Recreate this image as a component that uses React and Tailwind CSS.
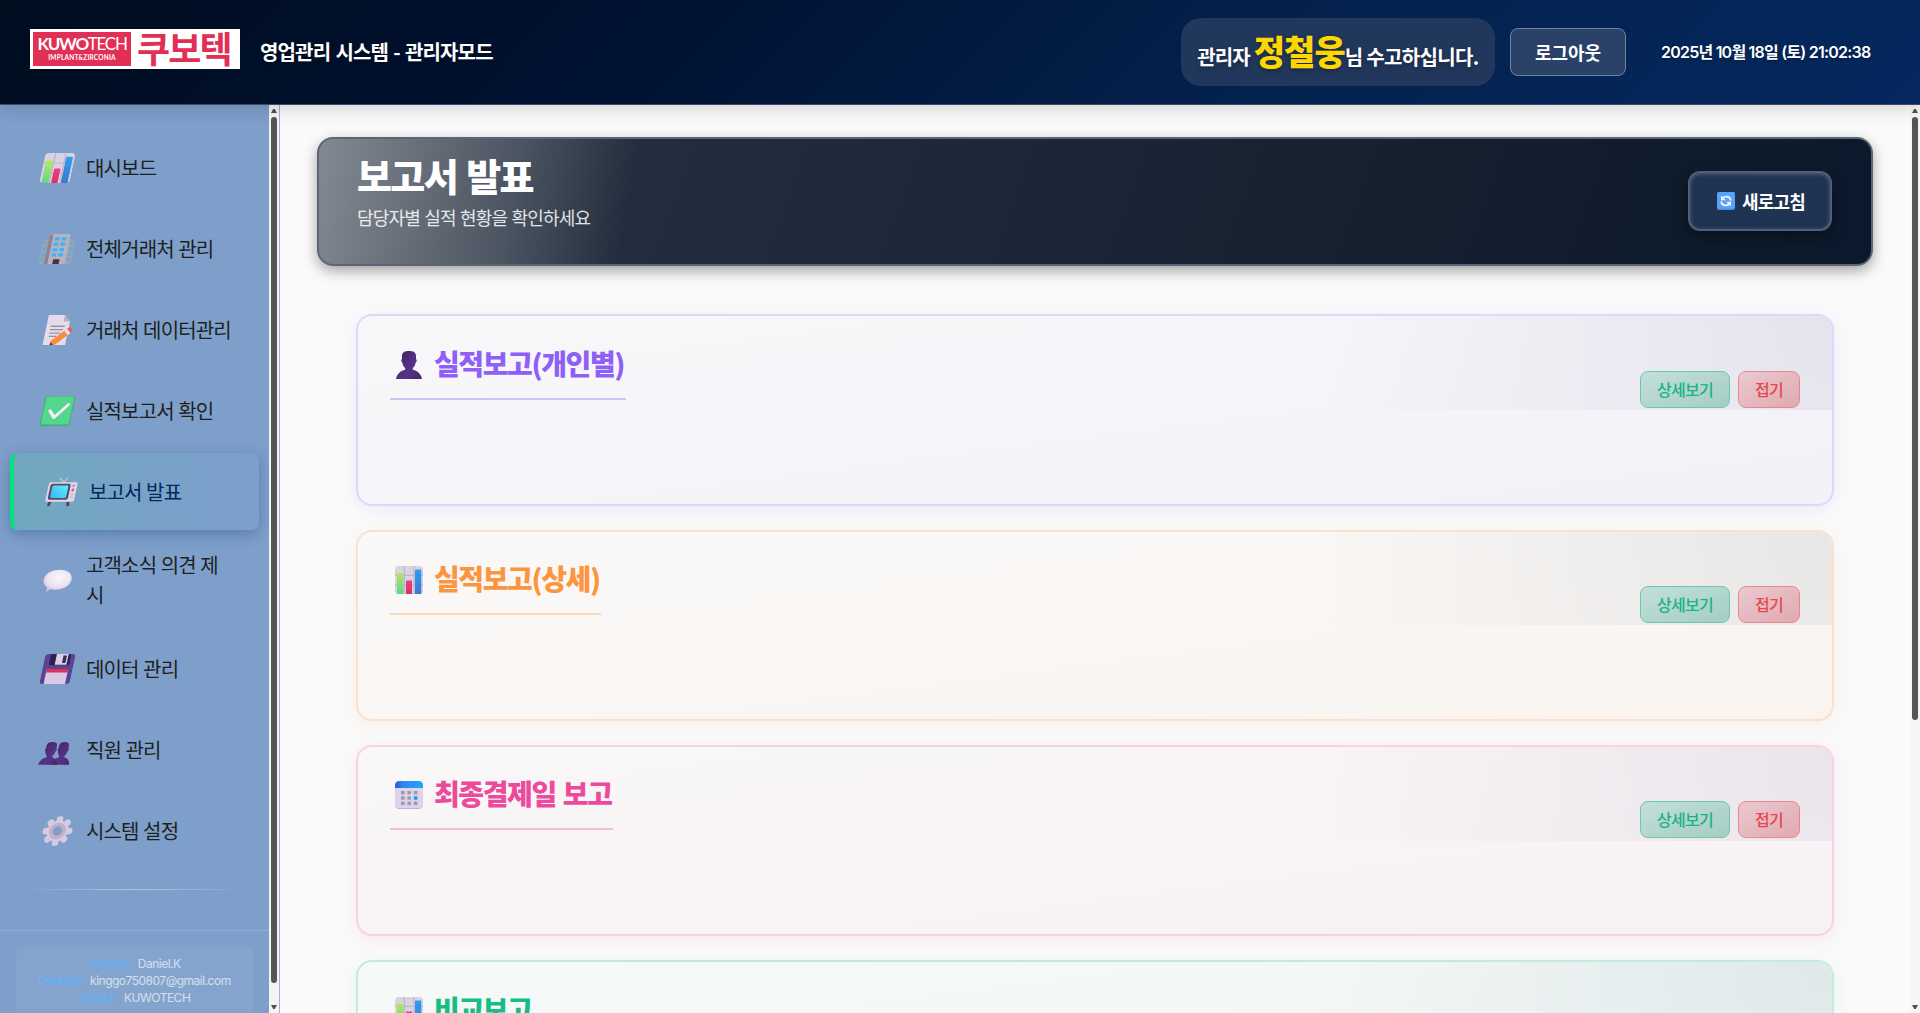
import React from "react";

const KR = "font-['Noto_Sans_CJK_KR',sans-serif]";

function ChartIcon({ className }) {
  return (
    <svg viewBox="0 0 28 28" className={className}>
      <defs>
        <linearGradient id="barGreen" x1="0" y1="0" x2="0" y2="1">
          <stop offset="0" stopColor="#b4e85c" />
          <stop offset="1" stopColor="#5fd68c" />
        </linearGradient>
        <linearGradient id="barRed" x1="0" y1="0" x2="0" y2="1">
          <stop offset="0" stopColor="#ee3d86" />
          <stop offset="1" stopColor="#d93360" />
        </linearGradient>
        <linearGradient id="barBlue" x1="0" y1="0" x2="0" y2="1">
          <stop offset="0" stopColor="#2f9df0" />
          <stop offset="1" stopColor="#3f78cc" />
        </linearGradient>
      </defs>
      <rect width="28" height="28" rx="3.5" fill="#d9d2e2" />
      <path d="M9.3 0v28M19 0v28M0 9.3h28M0 18.7h28" stroke="#b9b0c6" strokeWidth="1" />
      <rect x="2" y="7" width="6.5" height="21" fill="url(#barGreen)" />
      <rect x="11" y="14.5" width="6" height="13.5" rx="0.6" fill="url(#barRed)" />
      <rect x="20" y="3.5" width="6.3" height="24.5" rx="0.6" fill="url(#barBlue)" />
    </svg>
  );
}

function BuildingIcon({ className }) {
  const rows = [3, 8, 13, 18];
  return (
    <svg viewBox="0 0 28 28" className={`overflow-visible ${className}`}>
      <rect x="-1" y="5" width="30" height="23" rx="1" fill="#a79eae" />
      <path d="M5 0h17q1.500 0 1.500 1.500V28H4V1q0-1 1-1z" fill="#b9b1be" />
      <rect x="4" y="0.500" width="3.500" height="27.500" fill="#8c8494" />
      {rows.map((y) => (
        <g key={y} fill="#35b8fa">
          <rect x="9.500" y={y} width="4.400" height="3" />
          <rect x="15.800" y={y} width="4.400" height="3" />
          <rect x="0.200" y={y + 4.500} width="2.600" height="2.600" />
          <rect x="25" y={y + 4.500} width="2.600" height="2.600" />
        </g>
      ))}
      <rect x="12" y="23.500" width="6" height="4.500" fill="#46304f" />
    </svg>
  );
}

function MemoIcon({ className }) {
  return (
    <svg viewBox="0 0 28 28" className={className}>
      <path d="M3 0h15l6 6v22H3z" fill="#e4dcea" />
      <path d="M18 0v6h6z" fill="#b9aec4" />
      <path d="M7 10.5h13M7 13.7h12M7 16.9h10M7 20h7" stroke="#9a91a4" strokeWidth="1.2" />
      <path d="M10 24L22 13.5l4 4L14 28H9.5z" fill="#fb8b3c" />
      <path d="M20.5 14.8l2.3-2 4 4-2.3 2z" fill="#f1dfe8" />
      <path d="M22.8 12.8q2-2 4-.2 1.800 2 0 4.200z" fill="#f8583f" />
      <path d="M9.500 28l.5-2.500 2.500 2.500z" fill="#5a2a45" />
    </svg>
  );
}

function CheckIcon({ className }) {
  return (
    <svg viewBox="0 0 28 28" className={className}>
      <rect width="28" height="28" rx="2.500" fill="#3fb078" />
      <rect x="1" y="0.5" width="26" height="26" rx="2" fill="#55d68d" />
      <path d="M7 14l5 6L23 8" fill="none" stroke="#f4f0f8" strokeWidth="2.900" strokeLinecap="round" strokeLinejoin="round" />
    </svg>
  );
}

function TvIcon({ className }) {
  return (
    <svg viewBox="0 0 28 28" className={className}>
      <defs>
        <linearGradient id="tvScreen" x1="0" y1="1" x2="1" y2="0">
          <stop offset="0" stopColor="#35b5fb" />
          <stop offset="1" stopColor="#5ff0fb" />
        </linearGradient>
      </defs>
      <path d="M9 0.500L14.500 4.500 17.500 0" fill="none" stroke="#cfc6d4" strokeWidth="1" />
      <path d="M5 23l-1 4.500M22 23l1 4.500" stroke="#553d63" strokeWidth="2.600" />
      <rect x="0" y="4.500" width="28" height="19" rx="1.800" fill="#e0d6e8" />
      <rect x="2" y="6" width="19.500" height="15.500" rx="2" fill="#5a4a62" />
      <rect x="4" y="7.700" width="15.500" height="12" rx="1.300" fill="url(#tvScreen)" />
      <circle cx="24.500" cy="8" r="1.300" fill="#a79bb2" />
      <circle cx="24.500" cy="12" r="1.400" fill="#f04fa0" />
      <path d="M23 16.500h3M23 19h3" stroke="#b9adc4" strokeWidth="1" />
    </svg>
  );
}

function BubbleIcon({ className }) {
  return (
    <svg viewBox="0 0 28 28" className={className}>
      <defs>
        <radialGradient id="bubble" cx="0.550" cy="0.350" r="0.700">
          <stop offset="0" stopColor="#faf7fc" />
          <stop offset="0.600" stopColor="#ece3f2" />
          <stop offset="1" stopColor="#c9b6dc" />
        </radialGradient>
      </defs>
      <path d="M14 4.500c8 0 13 4 13 9.300 0 5.500-5.500 9.200-13 9.200-1.800 0-3.400-.2-4.800-.5L6.500 25c-.5.300-1-.1-.9-.7l.4-3.300C3 19.500 1 17 1 13.800 1 8.500 6 4.500 14 4.500z" fill="url(#bubble)" />
    </svg>
  );
}

function FloppyIcon({ className }) {
  return (
    <svg viewBox="0 0 28 28" className={className}>
      <rect width="28" height="28" rx="2.500" fill="#5b4494" />
      <rect x="5" y="0" width="19" height="10.500" rx="1.500" fill="#2d2150" />
      <rect x="10.500" y="0" width="11" height="10" fill="#dcd0e6" />
      <rect x="17" y="1.500" width="3.200" height="7" fill="#3a2a60" />
      <rect x="4" y="14" width="20" height="14" fill="#d8c9e6" />
      <rect x="4" y="14" width="20" height="3.200" fill="#d93355" />
    </svg>
  );
}

function Person({ id }) {
  return (
    <>
      <defs>
        <linearGradient id={id} x1="0" y1="0" x2="1" y2="1">
          <stop offset="0" stopColor="#44225f" />
          <stop offset="0.600" stopColor="#56338a" />
          <stop offset="1" stopColor="#47256a" />
        </linearGradient>
      </defs>
      <path d="M14 0c4 0 6.500.8 7 4.500v3.500c1 .3 1 3.200-.3 3.500-.3 2.500-1.500 4.500-2.900 5.600v1.600c5 1.200 8.200 4.200 9.200 9.300H1c1-5.100 4.200-8.100 9.200-9.300v-1.600c-1.400-1.100-2.600-3.100-2.900-5.600C6 11.200 6 8.300 7 8V4.500C7.500.8 10 0 14 0z" fill={`url(#${id})`} />
    </>
  );
}

function PersonIcon({ className }) {
  return (
    <svg viewBox="0 0 28 28" className={className}>
      <Person id="personOne" />
    </svg>
  );
}

function PeopleIcon({ className }) {
  return (
    <svg viewBox="0 0 28 28" className={`overflow-visible ${className}`}>
      <g transform="translate(10 6.500) scale(0.660 0.760)"><Person id="personBack" /></g>
      <g transform="translate(-2 6.500) scale(0.700 0.760)"><Person id="personFront" /></g>
    </svg>
  );
}

function GearIcon({ className }) {
  const teeth = [0, 45, 90, 135, 180, 225, 270, 315];
  return (
    <svg viewBox="0 0 28 28" className={className}>
      <g fill="#d9cae4">
        {teeth.map((a) => (
          <rect key={a} x="11" y="0.200" width="6" height="9" rx="2.400" transform={`rotate(${a} 14 14)`} />
        ))}
        <circle cx="14" cy="14" r="9.900" />
      </g>
      <circle cx="14" cy="14" r="6.300" fill="none" stroke="#c0b3ca" strokeWidth="3.400" />
      <circle cx="14" cy="14" r="4.300" fill="#7e9fca" stroke="#a99cb5" strokeWidth="0.800" />
    </svg>
  );
}

function CalendarIcon({ className }) {
  const rows = [10, 15.300, 20.600];
  const cols = [6, 12.400, 18.800];
  return (
    <svg viewBox="0 0 28 28" className={className}>
      <defs>
        <linearGradient id="calTop" x1="0" y1="0" x2="1" y2="0">
          <stop offset="0" stopColor="#2f56d8" />
          <stop offset="0.300" stopColor="#2f86f4" />
          <stop offset="1" stopColor="#22a6fb" />
        </linearGradient>
      </defs>
      <rect width="28" height="28" rx="4.500" fill="#cba5ee" />
      <rect width="28" height="27" rx="4" fill="#ddd3ea" />
      <path d="M0 7V5q0-5 5-5h18q5 0 5 5v2z" fill="url(#calTop)" />
      {rows.map((y, r) =>
        cols.map((x, c) => (
          <rect key={x + "-" + y} x={x} y={y} width="3.600" height="3.400" fill={r === 1 && c === 2 ? "#1f97f5" : "#a298ae"} />
        ))
      )}
    </svg>
  );
}

function RefreshIcon({ className }) {
  return (
    <svg viewBox="0 0 18 18" className={className}>
      <rect width="18" height="18" rx="2" fill="#4a8bee" />
      <rect width="18" height="16.500" rx="2" fill="#57a3fa" />
      <path d="M13.600 8.500C13.500 6 11.600 4.600 9.300 4.600 7.900 4.600 6.700 5.100 5.900 6" fill="none" stroke="#f6f2fb" strokeWidth="1.900" />
      <path d="M4 3.500v4.700h4.700z" fill="#f6f2fb" />
      <path d="M4.400 9.500C4.500 12 6.400 13.400 8.700 13.400c1.400 0 2.600-.5 3.400-1.400" fill="none" stroke="#f6f2fb" strokeWidth="1.900" />
      <path d="M14 14.500V9.800H9.300z" fill="#f6f2fb" />
    </svg>
  );
}

function ScrollBar({ thumb, className }) {
  return (
    <div className={`flex w-[10px] shrink-0 flex-col items-center ${className}`}>
      <div className="flex h-3 shrink-0 items-center">
        <svg viewBox="0 0 6 4" className="h-1 w-1.5"><path d="M0 4L2.200 0h1.600L6 4z" fill="#505050" /></svg>
      </div>
      <div className={`w-1.5 rounded-full bg-[#555] ${thumb}`} />
      <div className="mt-auto flex h-3 shrink-0 items-center">
        <svg viewBox="0 0 6 4" className="h-1 w-1.5"><path d="M0 0L2.200 4h1.600L6 0z" fill="#505050" /></svg>
      </div>
    </div>
  );
}

const NAV = [
  { label: "대시보드", Icon: ChartIcon },
  { label: "전체거래처 관리", Icon: BuildingIcon },
  { label: "거래처 데이터관리", Icon: MemoIcon },
  { label: "실적보고서 확인", Icon: CheckIcon },
  { label: "보고서 발표", Icon: TvIcon, active: true },
  { label: "고객소식 의견 제시", Icon: BubbleIcon },
  { label: "데이터 관리", Icon: FloppyIcon },
  { label: "직원 관리", Icon: PeopleIcon },
  { label: "시스템 설정", Icon: GearIcon },
];

function NavItem({ label, Icon, active }) {
  const box = active
    ? "border-l-4 border-[#00e676] bg-gradient-to-r from-[#71a8c0] to-[#7c9ecb] pl-[31px] text-[#04265c] shadow-[0_4px_14px_rgba(30,60,110,0.350)]"
    : "pl-[31px] text-[#1f1f1f]";
  return (
    <div className={`mx-[10px] flex min-h-[77px] w-[249px] items-center rounded-lg py-4 ${box}`}>
      <Icon className={`mr-[13px] h-[30px] shrink-0 -skew-x-12 ${active ? "ml-[2px] w-[29px]" : "ml-px w-[31px]"}`} />
      <span className="w-[147px] break-all text-[20px] leading-[30px] tracking-[-0.850px] [word-spacing:0.800px]">{label}</span>
    </div>
  );
}

function Sidebar() {
  return (
    <aside className="flex w-[280px] shrink-0 border-r border-[#9db4d6] bg-[#7e9fca]">
      <div className="flex w-[269px] shrink-0 flex-col overflow-hidden">
        <nav className="flex flex-col gap-1 pt-6">
          {NAV.map((n) => (
            <NavItem key={n.label} {...n} />
          ))}
        </nav>
        <div className="mx-5 mt-[20px] h-px shrink-0 bg-gradient-to-r from-transparent via-white/40 to-transparent" />
        <div className="mt-[40px] h-px shrink-0 bg-white/15" />
        <div className="mx-4 mt-4 flex h-20 shrink-0 flex-col items-center rounded-md bg-white/5 pt-2 font-[Inter,sans-serif] text-[12px] leading-[17px] tracking-[-0.500px] text-white/65">
          <p><b className="mr-[6px] font-semibold text-[#64b0f4]">Creator:</b>Daniel.K</p>
          <p><b className="mr-[6px] font-semibold text-[#64b0f4]">Contact:</b>kinggo750807@gmail.com</p>
          <p><b className="mr-[6px] font-semibold text-[#64b0f4]">Owner:</b>KUWOTECH</p>
        </div>
      </div>
      <ScrollBar className="bg-[#f4f4f6]" thumb="h-[866px]" />
    </aside>
  );
}

function Logo() {
  return (
    <div className="mb-1.5 flex h-10 w-[210px] items-start bg-white pl-[3px] pt-[3px] text-[#e22f55]">
      <div className="flex h-[34px] w-[98px] flex-col items-center overflow-hidden bg-[#e22f55] font-[Lato,sans-serif] text-white">
        <div className="mt-[2px] whitespace-nowrap text-[17px] leading-[20px] tracking-[-1.300px]">
          <span className="font-bold">KUWO</span>
          <span className="font-normal">TECH</span>
        </div>
        <div className="whitespace-nowrap text-[6.500px] font-bold leading-[8px] tracking-[0.200px]">IMPLANT&amp;ZIRCONIA</div>
      </div>
      <span className="-mt-[2px] ml-[6px] whitespace-nowrap text-[36px] font-bold leading-[34px] tracking-[-1.900px]">쿠보텍</span>
    </div>
  );
}

function Header() {
  return (
    <header className="z-10 flex h-[105px] shrink-0 items-center border-b border-[#3a4a68] bg-[linear-gradient(135deg,#000d1f_0%,#001233_35%,#04214c_65%,#04285f_100%)] pl-[30px] pr-[49px] font-bold text-white shadow-[0_4px_16px_rgba(0,0,0,0.150)]">
      <Logo />
      <h1 className="ml-5 whitespace-nowrap text-[20px] tracking-[-0.850px] [text-shadow:0_2px_4px_rgba(0,0,0,0.300)] [word-spacing:1.500px]">영업관리 시스템 - 관리자모드</h1>
      <div className="ml-auto flex h-[68px] w-[314px] items-center justify-center rounded-[20px] bg-[#21375b]">
        <p className="mt-1 flex items-baseline whitespace-nowrap text-[20px] leading-[40px] tracking-[-0.650px] [text-shadow:0_2px_4px_rgba(0,0,0,0.300)]">
          <span className="tracking-[-0.900px]">관리자</span>
          <span className="ml-1 text-[34px] font-black tracking-[-1px] text-[#ffd700]">정철웅</span>
          <span>님 수고하십니다.</span>
        </p>
      </div>
      <button className="ml-[15px] h-12 w-[116px] rounded-lg border border-[#6f82a0] bg-[#2a4268] text-[18px]">로그아웃</button>
      <span className="ml-[35px] w-[210px] whitespace-nowrap font-[Inter,'Noto_Sans_CJK_KR',sans-serif] text-[16px] font-semibold tracking-[-0.780px] [text-shadow:0_1px_2px_rgba(0,0,0,0.300)]">2025년 10월 18일 (토) 21:02:38</span>
    </header>
  );
}

const CARDS = [
  {
    title: "실적보고(개인별)",
    Icon: PersonIcon,
    box: "border-[#e0d5fa] from-[#f8f8fa] to-[#f3f1f8] shadow-[0_4px_16px_rgba(139,92,246,0.100)]",
    text: "text-[#8f5ff7] border-[#d3c3f4]",
    width: "w-[236px]",
    glow: "from-[#e5e4ee]",
  },
  {
    title: "실적보고(상세)",
    Icon: ChartIcon,
    box: "border-[#fbe0cb] from-[#faf9f8] to-[#f9f4f0] shadow-[0_4px_16px_rgba(251,146,60,0.100)]",
    text: "text-[#fd953e] border-[#fbd6b6]",
    width: "w-[211px]",
    glow: "from-[#e8e7e6]",
  },
  {
    title: "최종결제일 보고",
    Icon: CalendarIcon,
    box: "border-[#f7d1e4] from-[#f9f7f8] to-[#f8f1f3] shadow-[0_4px_16px_rgba(236,72,153,0.100)]",
    text: "text-[#ee4a9b] border-[#f4bcd9]",
    width: "w-[223px]",
    glow: "from-[#e9e5eb]",
  },
  {
    title: "비교보고",
    Icon: ChartIcon,
    box: "border-[#c3ebdd] from-[#f6f9f8] to-[#eff6f4] shadow-[0_4px_16px_rgba(16,185,129,0.100)]",
    text: "text-[#18bd85] border-[#a5e2cb]",
    width: "w-[142px]",
    glow: "from-[#e0e8ea]",
  },
];

function ReportCard({ title, Icon, box, text, width, glow }) {
  return (
    <section className={`relative flex h-[191.330px] shrink-0 items-start justify-between overflow-hidden rounded-2xl border-2 bg-gradient-to-br px-8 ${box}`}>
      <div className={`absolute right-0 top-0 h-1/2 w-2/5 bg-[radial-gradient(circle_515px_at_100%_0%,var(--tw-gradient-from),transparent)] ${glow}`} />
      <h2 className={`relative mt-[25.500px] flex h-[58px] items-start whitespace-nowrap border-b-2 pl-[5px] text-[28px] font-extrabold leading-[42px] tracking-[-1.400px] [word-spacing:2px] ${text} ${width}`}>
        <Icon className="mr-[11px] mt-[9px] h-7 w-7 shrink-0" />
        <span>{title}</span>
      </h2>
      <div className="relative mt-[54.500px] flex gap-2 text-[16px] font-medium tracking-[-0.700px]">
        <button className="h-[37px] w-[90px] rounded-lg border border-[#6cc8a9] bg-gradient-to-br from-[#c3e0da] to-[#a4cdc4] pb-px text-[#1ab383]">상세보기</button>
        <button className="h-[37px] w-[62px] rounded-lg border border-[#e38a90] bg-gradient-to-br from-[#ebc9d0] to-[#e0a9b0] pb-px text-[#e5484d]">접기</button>
      </div>
    </section>
  );
}

function Banner() {
  return (
    <section className="flex h-[129px] shrink-0 items-center justify-between rounded-2xl border-2 border-[#5b6573] bg-[linear-gradient(100deg,rgba(255,255,255,0.430)_0%,rgba(255,255,255,0.180)_13%,rgba(255,255,255,0)_20.500%),linear-gradient(110deg,#263040_0%,#222d3d_20%,#1b2736_45%,#15202f_70%,#0e1b2b_88%,#0c192d_100%)] pl-[38px] pr-[39px] text-white shadow-[0_5px_14px_rgba(0,0,0,0.350)]">
      <div className="flex h-full flex-col whitespace-nowrap pt-[11px]">
        <h1 className="text-[38px] font-extrabold leading-[50px] tracking-[-1.600px] [word-spacing:2px]">보고서 발표</h1>
        <p className="mt-[4px] text-[18px] leading-[26px] tracking-[-0.800px] text-white/85 [word-spacing:1px]">담당자별 실적 현황을 확인하세요</p>
      </div>
      <button className="mb-px flex h-[60px] w-[144px] items-center justify-center rounded-xl border-2 border-[#4d5f7b] bg-[#1f3352] pl-[2px] text-[18px] font-bold tracking-[-0.800px] shadow-[0_6px_14px_rgba(0,0,0,0.350),inset_0_1px_4px_rgba(255,255,255,0.250)]">
        <RefreshIcon className="mr-[7px] h-[18px] w-[18px]" />
        새로고침
      </button>
    </section>
  );
}

export default function App() {
  return (
    <div className={`flex h-[1013px] w-[1920px] flex-col overflow-hidden bg-[#fafafa] ${KR}`}>
      <Header />
      <div className="flex min-h-0 flex-1">
        <Sidebar />
        <main className="flex min-w-0 flex-1 flex-col overflow-hidden pl-[37px] pr-[37px] pt-8">
          <Banner />
          <div className="mt-[48.300px] flex flex-col gap-6 px-[39px]">
            {CARDS.map((c) => (
              <ReportCard key={c.title} {...c} />
            ))}
          </div>
        </main>
        <ScrollBar className="bg-[#f6f6f6]" thumb="h-[603px]" />
      </div>
    </div>
  );
}
